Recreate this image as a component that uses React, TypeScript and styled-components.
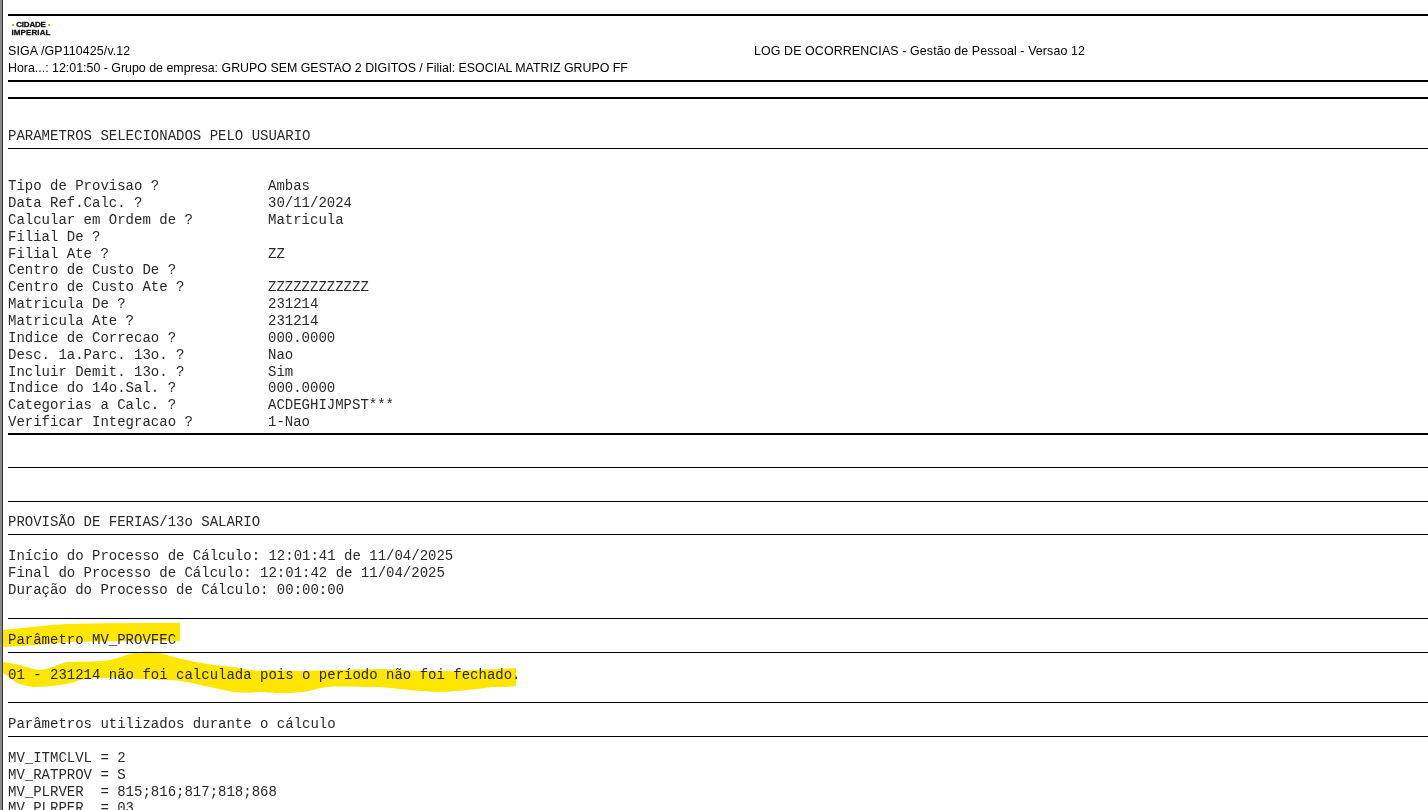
import React from "react";
import styled, { createGlobalStyle } from "styled-components";

const Global = createGlobalStyle`
  html, body { margin: 0; padding: 0; background: #fff; overflow: hidden; }
  #root { height: 810px; overflow: hidden; }
`;

const Page = styled.div`
  position: relative;
  height: 810px;
  overflow: hidden;
  box-sizing: border-box;
  border-left: 2px solid #8a8a8a;
  box-shadow: inset 1px 0 0 #333;
  padding: 14px 0 0 6px;
  background: #fff;
`;

const Rule = styled.hr<{ $thick?: boolean }>`
  margin: 0;
  border: 0;
  height: ${(p) => (p.$thick ? 2 : 1)}px;
  background: #000;
`;

const Header = styled.header`
  height: 64px;
  box-sizing: border-box;
  display: flex;
  flex-direction: column;
`;

const Logo = styled.div`
  width: 40px;
  height: 24px;
  margin: 0 0 0 3px;
  display: flex;
  flex-direction: column;
  align-items: center;
  font-family: "Liberation Sans", Arial, sans-serif;
  font-weight: 700;
  font-size: 8px;
  line-height: 7.5px;
  color: #111;
  -webkit-text-stroke: 0.3px #111;
`;

const LogoTiny = styled.span`
  height: 5px;
  font-size: 2px;
  line-height: 4px;
  letter-spacing: 0.5px;
  color: #666;
  -webkit-text-stroke: 0;
`;

const LogoWord = styled.span<{ $tight?: boolean }>`
  display: flex;
  align-items: center;
  gap: 2px;
  white-space: nowrap;
  letter-spacing: ${(p) => (p.$tight ? "-0.2px" : "0.1px")};
`;

const LogoDot = styled.i`
  width: 2px;
  height: 2px;
  background: #e8a13a;
`;

const HeaderLine = styled.div`
  display: grid;
  grid-template-columns: 746px 1fr;
  font-family: "Liberation Sans", Arial, sans-serif;
  font-size: 12.4px;
  line-height: 17px;
  color: #000;
  white-space: nowrap;
`;

const ReportTitle = styled.span`
  letter-spacing: 0.12px;
`;

const Spacer = styled.div<{ $h: number }>`
  height: ${(p) => p.$h}px;
`;

const Mono = styled.div<{ $top: number; $bottom: number }>`
  padding: ${(p) => p.$top}px 0 ${(p) => p.$bottom}px;
  font-family: "Liberation Mono", "Courier New", monospace;
  font-size: 14px;
  line-height: 16.85px;
  color: #2a2a2a;
  white-space: pre;
`;

const ParamRow = styled.div`
  display: grid;
  grid-template-columns: 260px 1fr;
  height: 16.85px;
`;

const Highlights = styled.svg`
  position: absolute;
  left: -2px;
  top: 0;
  width: 1428px;
  height: 810px;
  mix-blend-mode: multiply;
  pointer-events: none;
`;

const params: [string, string][] = [
  ["Tipo de Provisao ?", "Ambas"],
  ["Data Ref.Calc. ?", "30/11/2024"],
  ["Calcular em Ordem de ?", "Matricula"],
  ["Filial De ?", ""],
  ["Filial Ate ?", "ZZ"],
  ["Centro de Custo De ?", ""],
  ["Centro de Custo Ate ?", "ZZZZZZZZZZZZ"],
  ["Matricula De ?", "231214"],
  ["Matricula Ate ?", "231214"],
  ["Indice de Correcao ?", "000.0000"],
  ["Desc. 1a.Parc. 13o. ?", "Nao"],
  ["Incluir Demit. 13o. ?", "Sim"],
  ["Indice do 14o.Sal. ?", "000.0000"],
  ["Categorias a Calc. ?", "ACDEGHIJMPST***"],
  ["Verificar Integracao ?", "1-Nao"],
];

export default function App() {
  return (
    <Page>
      <Global />
      <Rule $thick />
      <Header>
        <Logo>
          <LogoTiny>· · · · ·</LogoTiny>
          <LogoWord $tight>
            <LogoDot />
            CIDADE
            <LogoDot />
          </LogoWord>
          <LogoWord>IMPERIAL</LogoWord>
        </Logo>
        <Spacer $h={3} />
        <HeaderLine>
          <ReportTitle>SIGA /GP110425/v.12</ReportTitle>
          <ReportTitle>LOG DE OCORRENCIAS - Gestão de Pessoal - Versao 12</ReportTitle>
        </HeaderLine>
        <HeaderLine>
          <span>Hora...: 12:01:50 - Grupo de empresa: GRUPO SEM GESTAO 2 DIGITOS / Filial: ESOCIAL MATRIZ GRUPO FF</span>
        </HeaderLine>
      </Header>
      <Rule $thick />
      <Spacer $h={15} />
      <Rule $thick />
      <Mono $top={28.6} $bottom={3.6}>PARAMETROS SELECIONADOS PELO USUARIO</Mono>
      <Rule />
      <Mono $top={29.2} $bottom={2}>
        {params.map(([k, v]) => (
          <ParamRow key={k}>
            <span>{k}</span>
            <span>{v}</span>
          </ParamRow>
        ))}
      </Mono>
      <Rule $thick />
      <Spacer $h={32} />
      <Rule />
      <Spacer $h={33} />
      <Rule />
      <Mono $top={12.6} $bottom={2.6}>PROVISÃO DE FERIAS/13o SALARIO</Mono>
      <Rule />
      <Mono $top={13} $bottom={19.4}>
        {"Início do Processo de Cálculo: 12:01:41 de 11/04/2025\nFinal do Processo de Cálculo: 12:01:42 de 11/04/2025\nDuração do Processo de Cálculo: 00:00:00"}
      </Mono>
      <Rule />
      <Mono $top={13.6} $bottom={2.6}>Parâmetro MV_PROVFEC</Mono>
      <Rule />
      <Mono $top={14.6} $bottom={17.6}>01 - 231214 não foi calculada pois o período não foi fechado.</Mono>
      <Rule />
      <Mono $top={13.6} $bottom={2.6}>Parâmetros utilizados durante o cálculo</Mono>
      <Rule />
      <Mono $top={13} $bottom={0}>
        {"MV_ITMCLVL = 2\nMV_RATPROV = S\nMV_PLRVER  = 815;816;817;818;868\nMV_PLRPER  = 03"}
      </Mono>
      <Highlights viewBox="0 0 1428 810">
        <path
          fill="#ffe600"
          d="M3 630 C25 628 45 625 67 624 C100 623 140 623 180 623 L180 641 C140 641 100 641 70 642 C45 644 25 646 3 647 Z"
        />
        <path
          fill="#ffe600"
          d="M3 662 C10 663 15 664 20 665 C28 667 35 670 40 670 C50 669 58 664 67 662 C85 661 100 662 110 660 C122 657 130 653 140 652 C150 651 155 652 160 653 C170 656 180 659 187 660 C205 664 220 666 233 667 C245 669 255 672 270 670 L300 671 C325 670 350 670 377 669 C395 669 410 671 427 671 C455 672 490 669 516 668 L516 686 C510 687 500 687 493 687 C475 689 455 692 437 692 C415 691 395 688 377 687 C360 687 340 686 327 687 C318 688 312 691 303 692 C295 693 288 693 280 693 C270 693 265 692 260 692 C250 693 245 693 233 692 C222 690 212 687 200 685 C190 682 175 680 167 680 C145 679 120 678 100 678 C90 678 82 679 80 680 C72 683 68 684 60 685 C50 686 42 687 33 687 C25 686 20 684 17 683 C12 680 8 676 3 673 Z"
        />
      </Highlights>
    </Page>
  );
}
